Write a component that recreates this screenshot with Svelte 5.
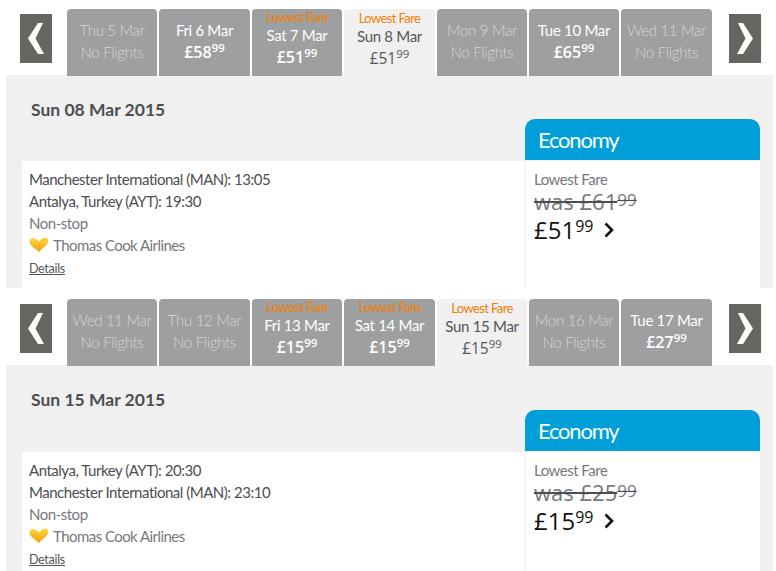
<script>
  const blocks = [
    {
      date: 'Sun 08 Mar 2015',
      days: [
        { d: 'Thu 5 Mar' },
        { d: 'Fri 6 Mar', p: '58' },
        { d: 'Sat 7 Mar', p: '51', low: true },
        { d: 'Sun 8 Mar', p: '51', low: true, sel: true },
        { d: 'Mon 9 Mar' },
        { d: 'Tue 10 Mar', p: '65' },
        { d: 'Wed 11 Mar' }
      ],
      from: 'Manchester International (MAN): 13:05',
      to: 'Antalya, Turkey (AYT): 19:30',
      was: '61',
      now: '51'
    },
    {
      date: 'Sun 15 Mar 2015',
      days: [
        { d: 'Wed 11 Mar' },
        { d: 'Thu 12 Mar' },
        { d: 'Fri 13 Mar', p: '15', low: true },
        { d: 'Sat 14 Mar', p: '15', low: true },
        { d: 'Sun 15 Mar', p: '15', low: true, sel: true },
        { d: 'Mon 16 Mar' },
        { d: 'Tue 17 Mar', p: '27' }
      ],
      from: 'Antalya, Turkey (AYT): 20:30',
      to: 'Manchester International (MAN): 23:10',
      was: '25',
      now: '15'
    }
  ];
</script>

<main class="page">
  {#each blocks as b}
    <section class="block">
      <div class="strip">
        <button class="nav" aria-label="Previous">
          <svg width="16" height="31" viewBox="0 0 16 31"><path d="M10 0 H15 L7.5 15.5 L16 31 H10 L0 15.5 Z" fill="#fff" /></svg>
        </button>
        <div class="days">
          {#each b.days as day}
            <div class="day" class:sel={day.sel} class:none={!day.p} class:low={day.low}>
              {#if day.low}<span class="lf">Lowest Fare</span>{/if}
              <span class="dn">{day.d}</span>
              {#if day.p}
                <span class="pr">£{day.p}<sup>99</sup></span>
              {:else}
                <span class="nf">No Flights</span>
              {/if}
            </div>
          {/each}
        </div>
        <button class="nav" aria-label="Next">
          <svg width="16" height="31" viewBox="0 0 16 31"><path d="M6 0 H1 L8.500 15.500 L0 31 H6 L16 15.500 Z" fill="#fff" /></svg>
        </button>
      </div>
      <div class="panel">
        <div class="head">
          <h2>{b.date}</h2>
          <div class="cabin">Economy</div>
        </div>
        <div class="row">
          <div class="info">
            <div class="strong">{b.from}</div>
            <div class="strong">{b.to}</div>
            <div>Non-stop</div>
            <div class="air">
              <svg width="20" height="16" viewBox="0 0 20 16">
                <defs><linearGradient id="h{b.now}" x1="0" y1="0" x2="0" y2="1"><stop offset="0" stop-color="#ffd84a" /><stop offset="1" stop-color="#f79a00" /></linearGradient></defs>
                <path d="M10 15.5 C9 12.5 0.5 9.500 0.500 5 C0.500 2 2.500 0.500 5 1 C7 1.300 8.500 3 10 4.500 C12 2.500 13.500 0.500 16 0.500 C18.500 0.500 19.500 2.500 19 5 C18 9.500 11.500 11.500 10 15.5 Z" fill="url(#h{b.now})" />
              </svg>
              Thomas Cook Airlines
            </div>
            <a href="#details" class="details">Details</a>
          </div>
          <div class="fare">
            <div>Lowest Fare</div>
            <div class="was"><s>was £{b.was}</s><sup><s>99</s></sup></div>
            <div class="now"><span>£{b.now}<sup>99</sup></span>
              <svg width="10" height="16" viewBox="0 0 10 16"><path d="M1.500 1.500 L8 8 L1.500 14.500" fill="none" stroke="#111" stroke-width="2.6" /></svg>
            </div>
          </div>
        </div>
      </div>
    </section>
  {/each}
</main>

<style>
  :global(body) { margin: 0; background: #fff; }
  .page {
    width: 776px;
    height: 571px;
    overflow: hidden;
    font-family: Lato, "Open Sans", "Liberation Sans", sans-serif;
    color: #55565a;
  }
  .block { height: 290px; padding-top: 9px; box-sizing: border-box; }
  .block + .block { height: 281px; }
  .strip { position: relative; z-index: 1; display: flex; align-items: flex-start; height: 66px; margin-left: 20px; width: 741px; justify-content: space-between; }
  .nav {
    width: 32px; height: 49px; margin-top: 5px; padding: 0; border: 0;
    background: #666661; display: flex; align-items: center; justify-content: center;
  }
  .days { display: grid; grid-template-columns: 90px 91px 90px 91px 90px 90px 91px; gap: 2px; margin-left: 15px; margin-right: 17px; flex: 1; }
  .day {
    height: 67px; border-radius: 4px 4px 0 0; background: #9d9fa0; color: #fff;
    display: flex; flex-direction: column; align-items: center; text-align: center; font-size: 15px; line-height: 22px; letter-spacing: -0.3px;
    padding-top: 10px; box-sizing: border-box; min-width: 0; white-space: nowrap;
  }
  .day.none { color: #d6d6d6; font-weight: 300; }
  .day.low { padding-top: 2px; }
  .day.sel { background: #f0f0f0; color: #55565a; padding-top: 3px; }
  .lf { color: #f57e00; font-size: 13px; line-height: 13px; letter-spacing: -0.6px; }
  .day .dn + .pr { font-family: "Open Sans", sans-serif; letter-spacing: 0; font-weight: 600; font-size: 16px; }
  .day.sel .dn + .pr { font-weight: 400; font-size: 15.500px; }
  .pr sup { font-size: 11.500px; }
  sup { line-height: 0; vertical-align: baseline; position: relative; top: -0.55em; letter-spacing: 0; }
  .panel { background: #f0f0f0; margin-left: 6px; width: 767px; height: 213px; padding: 0 13px 0 16px; box-sizing: border-box; }
  .head { display: flex; justify-content: space-between; align-items: flex-start; height: 86px; }
  .block + .block .head { height: 87px; }
  .block + .block .cabin { margin-top: 45px; }
  h2 { margin: 24px 0 0 9px; font-size: 17.500px; line-height: 22px; font-weight: 700; color: #4e4e50; }
  .cabin {
    margin-top: 44px; width: 235px; height: 41px; box-sizing: border-box; background: #009fd9; color: #fff;
    border-radius: 10px 10px 0 0; padding-left: 13px; font-size: 22px; line-height: 42px; letter-spacing: -1.2px;
  }
  .row { display: flex; background: #fff; height: 127px; }
  .info { flex: 1; padding: 7px 0 0 7px; font-size: 15px; line-height: 22px; letter-spacing: -0.48px; color: #77787b; }
  .strong { color: #4d4d4f; }
  .air { display: flex; align-items: center; gap: 4px; letter-spacing: -0.55px; }
  .details { font-size: 12.500px; letter-spacing: -0.3px; color: #55565a; }
  .fare { width: 235px; box-sizing: border-box; border-left: 1px solid #f0f0f0; padding: 7px 0 0 8px; font-size: 15px; line-height: 22px; letter-spacing: -0.5px; color: #77787b; }
  .was { font-family: "Open Sans", sans-serif; font-size: 22px; line-height: 22px; letter-spacing: 0; color: #77787b; }
  .was s { text-decoration-thickness: 2px; text-decoration-color: #4d4d4f; }
  .was sup { font-size: 17px; top: -0.25em; }
  .was sup s { text-decoration-thickness: 1px; }
  .now { font-family: "Open Sans", sans-serif; font-size: 24px; line-height: 32px; letter-spacing: 0; color: #111; margin-top: 2px; display: flex; align-items: center; }
  .now sup { font-size: 16px; top: -0.45em; }
  .now svg { margin-left: 11px; }
</style>
